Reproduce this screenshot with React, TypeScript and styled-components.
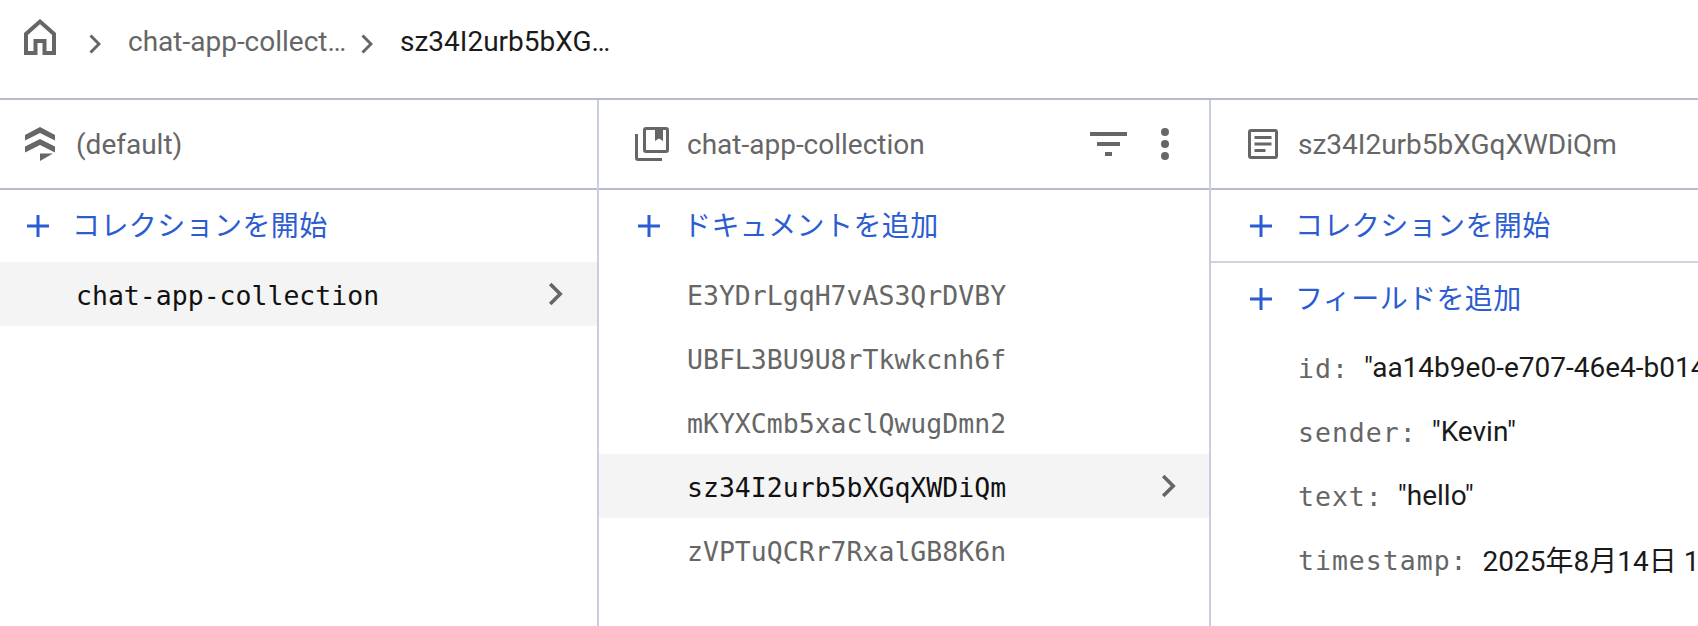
import React from "react";
import styled, { createGlobalStyle } from "styled-components";

const Global = createGlobalStyle`
  html, body { margin: 0; padding: 0; background: #fff; height: 100%; overflow: hidden; }
  #root { height: 100%; }
  * { box-sizing: border-box; }
`;

const SANS = `Roboto, "Noto Sans CJK JP", sans-serif`;
const MONO = `"DejaVu Sans Mono", "Liberation Mono", monospace`;

const Page = styled.div`
  height: 626px;
  width: 1698px;
  display: flex;
  flex-direction: column;
  font-family: ${SANS};
  overflow: hidden;
`;

const Breadcrumbs = styled.nav`
  height: 98px;
  flex: none;
  display: flex;
  align-items: center;
  padding: 0 0 11px 24px;
`;

const HomeIcon = styled.svg`
  width: 32px;
  height: 36px;
  flex: none;
  color: #666;
  margin: 0 33px 13px 0;
`;

const CrumbChevron = styled.svg<{ $gap: number }>`
  width: 12px;
  height: 20px;
  flex: none;
  color: #666;
  margin-right: ${(p) => p.$gap}px;
`;

const Crumb = styled.span<{ $active?: boolean; $width: number; $gap: number }>`
  font-size: 28px;
  color: ${(p) => (p.$active ? "#1a1a1a" : "#666")};
  width: ${(p) => p.$width}px;
  margin: 0 ${(p) => p.$gap}px 4px 0;
  white-space: nowrap;
  overflow: hidden;
  text-overflow: ellipsis;
  flex: none;
`;

const Columns = styled.div`
  flex: 1;
  display: grid;
  grid-template-columns: 599px 612px 1fr;
  border-top: 2px solid #b6bccd;
  min-height: 0;
`;

const Column = styled.section<{ $last?: boolean }>`
  display: flex;
  flex-direction: column;
  min-width: 0;
  border-right: ${(p) => (p.$last ? "none" : "2px solid #c9cede")};
  overflow: hidden;
`;

const ColumnHeader = styled.header<{ $pad: number }>`
  height: 90px;
  flex: none;
  display: flex;
  align-items: center;
  padding-left: ${(p) => p.$pad}px;
  border-bottom: 2px solid #b6bccd;
`;

const HeaderIcon = styled.svg<{ $w: number; $h: number; $gap: number }>`
  width: ${(p) => p.$w}px;
  height: ${(p) => p.$h}px;
  color: #666;
  flex: none;
  margin-right: ${(p) => p.$gap}px;
`;

const HeaderTitle = styled.span`
  font-size: 28px;
  color: #666;
  white-space: nowrap;
  flex: 1;
`;

const HeaderActions = styled.div`
  display: flex;
  align-items: center;
  gap: 34px;
  padding-right: 40px;
`;

const ActionIcon = styled.svg<{ $w: number }>`
  height: 32px;
  width: ${(p) => p.$w}px;
  color: #666;
`;

const AddRow = styled.div<{ $pad: number; $divider?: boolean; $h: number }>`
  height: ${(p) => p.$h}px;
  flex: none;
  display: flex;
  align-items: center;
  padding-left: ${(p) => p.$pad}px;
  color: #2b5cd2;
  font-size: 28px;
  letter-spacing: 0.4px;
  white-space: nowrap;
  ${(p) => (p.$divider ? "border-bottom: 2px solid #cfd3e0;" : "")}
`;

const AddLabel = styled.span`
  margin-bottom: 4px;
`;

const PlusIcon = styled.svg`
  width: 22px;
  height: 22px;
  flex: none;
  margin-right: 23px;
  color: #2b5cd2;
`;

const ItemRow = styled.div<{ $selected?: boolean; $pad: number; $right: number }>`
  height: 64px;
  flex: none;
  display: flex;
  align-items: center;
  justify-content: space-between;
  padding: 0 ${(p) => p.$right}px 0 ${(p) => p.$pad}px;
  background: ${(p) => (p.$selected ? "#f4f4f4" : "transparent")};
  color: ${(p) => (p.$selected ? "#111" : "#666")};
  font-family: ${MONO};
  font-size: 26.5px;
  white-space: nowrap;
`;

const ItemLabel = styled.span`
  margin-top: 2px;
`;

const RowChevron = styled.svg`
  width: 16px;
  height: 24px;
  color: #666;
  flex: none;
`;

const FieldRow = styled.div`
  height: 64px;
  flex: none;
  display: flex;
  align-items: center;
  padding-left: 87px;
  white-space: nowrap;
`;

const FieldKey = styled.span`
  font-family: ${MONO};
  font-size: 26.5px;
  letter-spacing: 1px;
  color: #666;
  margin: 2px 15px 0 0;
`;

const FieldValue = styled.span`
  font-size: 28px;
  color: #1a1a1a;
`;

const Plus = () => (
  <PlusIcon viewBox="0 0 22 22">
    <path d="M9.500 0h3v9.500H22v3h-9.500V22h-3v-9.500H0v-3h9.500z" fill="currentColor" />
  </PlusIcon>
);

const Chevron = ({ gap }: { gap: number }) => (
  <CrumbChevron $gap={gap} viewBox="0 0 12 20">
    <path d="M1.500 1.500 10 10l-8.500 8.500" fill="none" stroke="currentColor" strokeWidth="3" />
  </CrumbChevron>
);

const RightChevron = () => (
  <RowChevron viewBox="0 0 16 24">
    <path d="M2.200 2 12.200 12l-10 10" fill="none" stroke="currentColor" strokeWidth="3.600" />
  </RowChevron>
);

const docs = [
  "E3YDrLgqH7vAS3QrDVBY",
  "UBFL3BU9U8rTkwkcnh6f",
  "mKYXCmb5xaclQwugDmn2",
  "sz34I2urb5bXGqXWDiQm",
  "zVPTuQCRr7RxalGB8K6n",
];

const fields = [
  { key: "id:", value: '"aa14b9e0-e707-46e4-b014-5f1c3a9e7d20"' },
  { key: "sender:", value: '"Kevin"' },
  { key: "text:", value: '"hello"' },
  { key: "timestamp:", value: "2025年8月14日 10:32:18 UTC+9" },
];

export default function App() {
  return (
    <Page>
      <Global />
      <Breadcrumbs>
        <HomeIcon viewBox="0 0 32 36">
          <path
            d="M2 34V15L16 2.600 30 15v19H20.500V22h-9v12z"
            fill="none"
            stroke="currentColor"
            strokeWidth="4"
          />
        </HomeIcon>
        <Chevron gap={27} />
        <Crumb $width={220} $gap={13}>chat-app-collection</Crumb>
        <Chevron gap={27} />
        <Crumb $active $width={222} $gap={0}>sz34I2urb5bXGqXWDiQm</Crumb>
      </Breadcrumbs>
      <Columns>
        <Column>
          <ColumnHeader $pad={25}>
            <HeaderIcon $w={30} $h={34} $gap={21} viewBox="0 0 30 34">
              <path
                fill="currentColor"
                d="M15 0 30 8v5.500L15 6 0 13.500V8zM15 12l15 7.500v6L15 18 0 25.500v-6zM15 26.500h13L15 34z"
              />
            </HeaderIcon>
            <HeaderTitle>(default)</HeaderTitle>
          </ColumnHeader>
          <AddRow $pad={27} $h={72}>
            <Plus />
            <AddLabel>コレクションを開始</AddLabel>
          </AddRow>
          <ItemRow $selected $pad={76} $right={33}>
            <ItemLabel>chat-app-collection</ItemLabel>
            <RightChevron />
          </ItemRow>
        </Column>
        <Column>
          <ColumnHeader $pad={36}>
            <HeaderIcon $w={34} $h={34} $gap={18} viewBox="0 0 34 34">
              <path
                fill="currentColor"
                fillRule="evenodd"
                d="M11 0h20a3 3 0 0 1 3 3v20a3 3 0 0 1-3 3H11a3 3 0 0 1-3-3V3a3 3 0 0 1 3-3zm0 3v20h20V3h-3v11l-4-2.600-4 2.600V3zM0 7h3v24h24v3H3a3 3 0 0 1-3-3z"
              />
            </HeaderIcon>
            <HeaderTitle>chat-app-collection</HeaderTitle>
            <HeaderActions>
              <ActionIcon $w={37} viewBox="0 0 37 32">
                <path fill="currentColor" d="M0 4h37v4H0zM7 14h23v4H7zM15 24h7v4h-7z" />
              </ActionIcon>
              <ActionIcon $w={8} viewBox="0 0 8 32">
                <circle cx="4" cy="4" r="4" fill="currentColor" />
                <circle cx="4" cy="16" r="4" fill="currentColor" />
                <circle cx="4" cy="28" r="4" fill="currentColor" />
              </ActionIcon>
            </HeaderActions>
          </ColumnHeader>
          <AddRow $pad={39} $h={72}>
            <Plus />
            <AddLabel>ドキュメントを追加</AddLabel>
          </AddRow>
          {docs.map((d, i) => (
            <ItemRow key={d} $selected={i === 3} $pad={88} $right={32}>
              <ItemLabel>{d}</ItemLabel>
              {i === 3 && <RightChevron />}
            </ItemRow>
          ))}
        </Column>
        <Column $last>
          <ColumnHeader $pad={37}>
            <HeaderIcon $w={30} $h={30} $gap={20} viewBox="0 0 30 30">
              <path
                fill="currentColor"
                fillRule="evenodd"
                d="M3 0h24a3 3 0 0 1 3 3v24a3 3 0 0 1-3 3H3a3 3 0 0 1-3-3V3a3 3 0 0 1 3-3zm0 3v24h24V3zM6.500 7h17v3h-17zM6.500 13.500h17v3h-17zM6.500 20h11v3h-11z"
              />
            </HeaderIcon>
            <HeaderTitle>sz34I2urb5bXGqXWDiQm</HeaderTitle>
          </ColumnHeader>
          <AddRow $pad={39} $h={73} $divider>
            <Plus />
            <AddLabel>コレクションを開始</AddLabel>
          </AddRow>
          <AddRow $pad={39} $h={72}>
            <Plus />
            <AddLabel>フィールドを追加</AddLabel>
          </AddRow>
          {fields.map((f) => (
            <FieldRow key={f.key}>
              <FieldKey>{f.key}</FieldKey>
              <FieldValue>{f.value}</FieldValue>
            </FieldRow>
          ))}
        </Column>
      </Columns>
    </Page>
  );
}
